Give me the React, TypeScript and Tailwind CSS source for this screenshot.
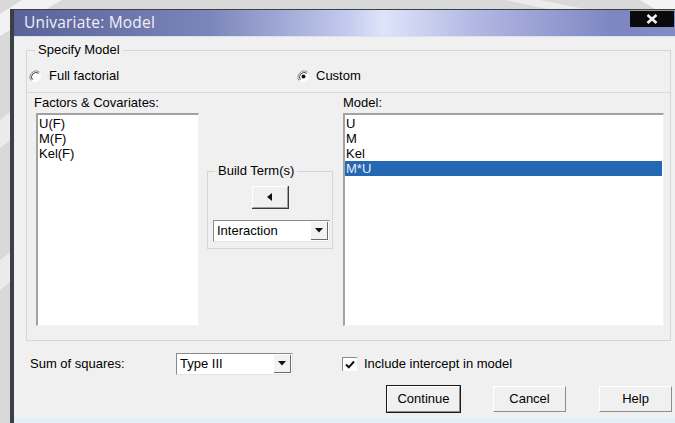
import React from "react";

const ui = { fontFamily: '"Liberation Sans", Arial, sans-serif' };

function Radio({ checked }: { checked?: boolean }) {
  return (
    <svg width="13" height="13" viewBox="0 0 13 13" className="shrink-0">
      <circle cx="6.5" cy="6.5" r="5.5" fill="#fff" />
      <path d="M10.7 2.3 A6 6 0 0 0 2.3 10.7" stroke="#8a8a8a" strokeWidth="1" fill="none" />
      <path d="M9.7 3.3 A4.6 4.6 0 0 0 3.3 9.7" stroke="#3c3c3c" strokeWidth="1" fill="none" />
      <path d="M2.3 10.7 A6 6 0 0 0 10.7 2.3" stroke="#f6f6f6" strokeWidth="1" fill="none" />
      {checked && <circle cx="6.5" cy="6.5" r="2" fill="#111" />}
    </svg>
  );
}

function Caret() {
  return (
    <svg width="8" height="5" viewBox="0 0 8 5">
      <polygon points="0,0 8,0 4,4.5" fill="#111" />
    </svg>
  );
}

function Combo({ value, width }: { value: string; width: string }) {
  return (
    <div
      className={`${width} h-[22px] flex border-t border-l border-[#8a8a8a] border-r border-b border-r-[#e6e6e6] border-b-[#e6e6e6] bg-white`}
    >
      <div className="flex-1 flex items-center pl-[3px] text-[13px] text-black">{value}</div>
      <div className="w-[17px] m-[1px] flex items-center justify-center bg-[#f2f2f2] border-r border-b border-[#6a6a6a]">
        <Caret />
      </div>
    </div>
  );
}

function ListBox({ items, selected, width }: { items: string[]; selected?: number; width: string }) {
  return (
    <div
      className={`${width} h-[213px] bg-white border-t-2 border-l-2 border-[#a2a2a2] border-r border-b border-r-[#f4f4f4] border-b-[#f4f4f4] pt-[1px] pr-[1px]`}
    >
      {items.map((t, i) => (
        <div
          key={t}
          className={`h-[15px] leading-[15px] pl-[1px] text-[13px] ${
            i === selected ? "bg-[#2467b3] text-[#e4eefa]" : "text-black"
          }`}
        >
          {t}
        </div>
      ))}
    </div>
  );
}

function Button({ label, isDefault }: { label: string; isDefault?: boolean }) {
  return (
    <div
      className={`w-[75px] h-[28px] ${isDefault ? "border border-[#1a1a1a]" : "border border-transparent"}`}
    >
      <div className="h-full flex items-center justify-center bg-[#f0f0f0] border-t border-l border-white border-r border-b border-r-[#8c8c8c] border-b-[#8c8c8c] text-[13px] text-black">
        {label}
      </div>
    </div>
  );
}

export default function App() {
  return (
    <div className="relative w-[675px] h-[423px] overflow-hidden bg-[#d9d9d9]" style={ui}>
      {/* backdrop stripes */}
      <svg className="absolute inset-0" width="675" height="423" viewBox="0 0 675 423">
        <polygon points="0,14 22,0 62,0 0,36" fill="#f2f2f2" />
        <polygon points="505,0 540,0 585,9 548,9" fill="#ececec" />
        <polygon points="640,0 675,0 675,9 655,9" fill="#f4f4f4" />
        <polygon points="0,120 10,112 10,140 0,148" fill="#ebebeb" />
        <polygon points="0,260 10,252 10,282 0,290" fill="#ebebeb" />
      </svg>

      <div className="relative pl-[10px] pt-[9px]">
        <div className="w-[700px] h-[414px] flex flex-col border-l-4 border-t border-[#3b3f46]">
          {/* title bar */}
          <div className="h-[26px] flex items-center justify-between bg-[linear-gradient(90deg,#5a6397_0%,#7b85b9_28%,#c3cbef_48%,#dfe4fa_53%,#b2b9e3_66%,#7e86c2_86%,#868ec6_100%)]">
            <span
              className="pl-[10px] text-[15.5px] text-[#eef0f8] tracking-[0.2px]"
              style={{ fontFamily: '"Open Sans", "Noto Sans", sans-serif' }}
            >
              Univariate: Model
            </span>
            <div className="mr-[36px] w-[44px] h-[17px] self-start flex items-center justify-center bg-[#0a0a0a] border-t border-[#9a9a9a]">
              <svg width="12" height="10" viewBox="0 0 12 10">
                <path d="M1.5 1 L10.5 9 M10.5 1 L1.5 9" stroke="#f2f2f2" strokeWidth="2.6" />
              </svg>
            </div>
          </div>
          <div className="h-[1px] bg-[#dde3f0]" />

          {/* dialog body */}
          <div className="flex-1 bg-[#f0f0f0] text-black">
            <fieldset className="ml-[12px] mt-[5px] w-[645px] border border-[#d6d6d6]">
              <legend className="ml-[8px] px-[3px] text-[13px] leading-[16px]">Specify Model</legend>
              <div className="h-[30px] flex items-center pl-[2px] pt-[6px]">
                <div className="w-[268px] flex items-center gap-[7px]">
                  <Radio />
                  <span className="text-[13px]">Full factorial</span>
                </div>
                <div className="flex items-center gap-[6px]">
                  <Radio checked />
                  <span className="text-[13px]">Custom</span>
                </div>
              </div>

              <div className="mt-[4px] border-t border-[#d8d8d8] flex pl-[7px] pb-[14px]">
                <div className="w-[165px] flex flex-col">
                  <div className="h-[20px] flex items-center text-[13px]">Factors &amp; Covariates:</div>
                  <div className="ml-[2px]">
                    <ListBox items={["U(F)", "M(F)", "Kel(F)"]} width="w-[163px]" />
                  </div>
                </div>

                <div className="w-[144px] pt-[70px]">
                  <fieldset className="ml-[8px] w-[126px] border border-[#d6d6d6] pb-[6px]">
                    <legend className="ml-[7px] px-[3px] text-[13px] leading-[16px]">Build Term(s)</legend>
                    <div className="flex justify-center pt-[7px]">
                      <div className="w-[37px] h-[23px] border-r border-b border-[#3a3a3a]">
                        <div className="h-full flex items-center justify-center bg-[#f0f0f0] border-t border-l border-white border-r border-b border-r-[#a0a0a0] border-b-[#a0a0a0]">
                          <svg width="5" height="8" viewBox="0 0 5 8">
                            <polygon points="5,0 5,8 0,4" fill="#111" />
                          </svg>
                        </div>
                      </div>
                    </div>
                    <div className="pl-[5px] pt-[11px]">
                      <Combo value="Interaction" width="w-[117px]" />
                    </div>
                  </fieldset>
                </div>

                <div className="w-[321px] flex flex-col">
                  <div className="h-[20px] flex items-center text-[13px]">Model:</div>
                  <ListBox items={["U", "M", "Kel", "M*U"]} selected={3} width="w-[321px]" />
                </div>
              </div>
            </fieldset>

            <div className="mt-[11px] flex items-center h-[23px]">
              <span className="ml-[16px] w-[146px] text-[13px]">Sum of squares:</span>
              <Combo value="Type III" width="w-[117px]" />
              <div className="ml-[49px] flex items-center gap-[7px]">
                <div className="w-[15px] h-[14px] flex items-center justify-center bg-white border-t border-l border-[#8a8a8a]">
                  <svg width="10" height="9" viewBox="0 0 10 9">
                    <path d="M1 4.5 L3.8 7.3 L9 1.5" stroke="#111" strokeWidth="2" fill="none" />
                  </svg>
                </div>
                <span className="text-[13px]">Include intercept in model</span>
              </div>
            </div>

            <div className="mt-[10px] ml-[372px] flex gap-[31px]">
              <Button label="Continue" isDefault />
              <Button label="Cancel" />
              <Button label="Help" />
            </div>
          </div>
          <div className="h-[5px] bg-[#e6eefa]" />
        </div>
      </div>
    </div>
  );
}
